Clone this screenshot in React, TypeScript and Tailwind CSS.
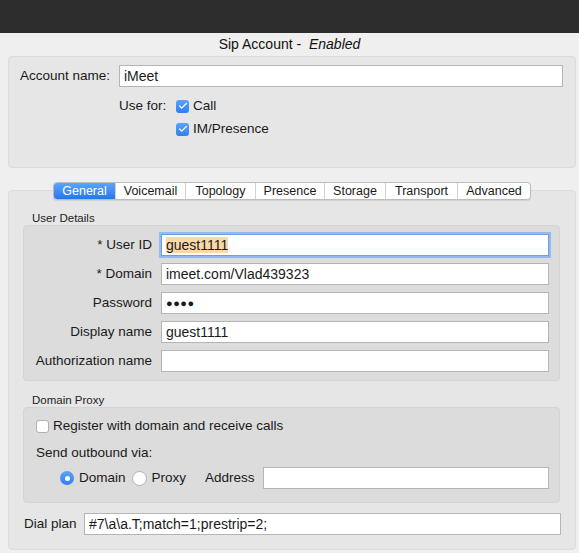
import { Check } from "lucide-react";

const tabs = [
  { label: "General", w: 62 },
  { label: "Voicemail", w: 70 },
  { label: "Topology", w: 70 },
  { label: "Presence", w: 69 },
  { label: "Storage", w: 61 },
  { label: "Transport", w: 72 },
  { label: "Advanced", w: 73 },
];

function Field({ children, focused }: { children?: React.ReactNode; focused?: boolean }) {
  return (
    <div
      className={
        focused
          ? "flex-1 h-[22px] bg-white border border-[#6f9fe0] shadow-[0_0_0_2px_#95bbec] flex items-center px-[4px] text-[14px] text-[#1a1a1a] whitespace-nowrap overflow-hidden"
          : "flex-1 h-[22px] bg-white border border-[#b5b5b5] flex items-center px-[4px] text-[14px] text-[#1a1a1a] whitespace-nowrap overflow-hidden"
      }
    >
      {children}
    </div>
  );
}

function BlueCheck() {
  return (
    <span className="w-[13px] h-[13px] rounded-[3px] bg-gradient-to-b from-[#5aa2fb] to-[#2f7ff3] flex items-center justify-center">
      <Check className="w-[10px] h-[10px] text-white" strokeWidth={3} />
    </span>
  );
}

function Row({ label, children, focused }: { label: string; children?: React.ReactNode; focused?: boolean }) {
  return (
    <div className="flex items-center h-[22px] mr-[10px]">
      <span className="w-[128px] text-right text-[13.5px] text-[#1a1a1a]">{label}</span>
      <div className="w-[9px]" />
      <Field focused={focused}>{children}</Field>
    </div>
  );
}

export default function App() {
  return (
    <div className="w-full h-[553px] bg-[#efefef] overflow-hidden flex flex-col" style={{ fontFamily: '"Liberation Sans", Arial, sans-serif' }}>
      <div className="h-[33px] bg-[#2d2d2d]" />

      <div className="h-[23px] flex items-center justify-center text-[14px] text-[#111]">
        <span>Sip Account -&nbsp;&nbsp;</span>
        <span className="italic">Enabled</span>
      </div>

      {/* Account box */}
      <div className="ml-[8px] mr-[3px] h-[112px] bg-[#e6e6e6] border border-[#dcdcdc] rounded-[4px] pt-[8px]">
        <div className="flex items-center h-[22px] mr-[12px]">
          <span className="w-[101px] text-right text-[13.5px] text-[#1a1a1a]">Account name:</span>
          <div className="w-[9px]" />
          <Field>iMeet</Field>
        </div>
        <div className="flex mt-[9px] pl-[110px] text-[13.5px] text-[#1a1a1a]">
          <span className="h-[20px] flex items-center w-[57px]">Use for:</span>
          <div className="flex flex-col gap-[3px]">
            <div className="h-[20px] flex items-center gap-[4px]">
              <BlueCheck />
              <span>Call</span>
            </div>
            <div className="h-[20px] flex items-center gap-[4px]">
              <BlueCheck />
              <span>IM/Presence</span>
            </div>
          </div>
        </div>
      </div>

      {/* Settings box */}
      <div className="mt-[22px] ml-[8px] mr-[3px] h-[360px] bg-[#e6e6e6] border border-[#dcdcdc] rounded-[4px]">
        <div className="-mt-[9px] pl-[44px] flex">
          <div className="flex h-[18px] rounded-[4px] border border-[#bcbcbc] bg-white shadow-[0_1px_1px_rgba(0,0,0,0.1)] overflow-hidden text-[12.5px]">
            {tabs.map((t, i) => (
              <div
                key={t.label}
                style={{ width: t.w - (i === 0 ? 1 : 0) }}
                className={
                  i === 0
                    ? "h-full flex items-center justify-center bg-gradient-to-b from-[#5ea3f8] to-[#2277ee] text-white"
                    : "h-full flex items-center justify-center border-l border-[#d2d2d2] text-[#1a1a1a]"
                }
              >
                {t.label}
              </div>
            ))}
          </div>
        </div>

        <div className="mt-[11px] h-[14px] pl-[23px] text-[11.5px] leading-[14px] text-[#222]">User Details</div>

        <div className="ml-[14px] mr-[15px] bg-[#dcdcdc] border border-[#d4d4d4] rounded-[4px] pt-[8px] pb-[8px] flex flex-col gap-[7px]">
          <Row label="* User ID" focused>
            <span className="bg-[#fbd8a8] leading-[16px]">guest1111</span>
          </Row>
          <Row label="* Domain">imeet.com/Vlad439323</Row>
          <Row label="Password">
            <span className="text-[11px] tracking-[0.5px]">●●●●</span>
          </Row>
          <Row label="Display name">guest1111</Row>
          <Row label="Authorization name" />
        </div>

        <div className="mt-[12px] h-[14px] pl-[23px] text-[11.5px] leading-[14px] text-[#222]">Domain Proxy</div>

        <div className="ml-[14px] mr-[15px] h-[96px] bg-[#dcdcdc] border border-[#d4d4d4] rounded-[4px] pt-[8px] text-[13.5px] text-[#1a1a1a]">
          <div className="h-[20px] flex items-center pl-[12px] gap-[4px]">
            <span className="w-[13px] h-[13px] rounded-[3px] bg-white border border-[#b0b0b0]" />
            <span>Register with domain and receive calls</span>
          </div>
          <div className="mt-[7px] h-[20px] flex items-center pl-[12px]">Send outbound via:</div>
          <div className="mt-[4px] h-[22px] flex items-center pl-[36px] mr-[10px]">
            <span className="w-[14px] h-[14px] rounded-full bg-gradient-to-b from-[#5aa2fb] to-[#2f7ff3] flex items-center justify-center">
              <span className="w-[5px] h-[5px] rounded-full bg-white" />
            </span>
            <span className="ml-[5px]">Domain</span>
            <span className="ml-[6px] w-[15px] h-[15px] rounded-full bg-white border border-[#b0b0b0]" />
            <span className="ml-[5px]">Proxy</span>
            <span className="ml-[19px]">Address</span>
            <div className="w-[8px]" />
            <Field />
          </div>
        </div>

        <div className="mt-[10px] flex items-center h-[22px] pl-[15px] mr-[14px] text-[13.5px] text-[#1a1a1a]">
          <span className="w-[60px]">Dial plan</span>
          <Field>#7\a\a.T;match=1;prestrip=2;</Field>
        </div>
      </div>
    </div>
  );
}
